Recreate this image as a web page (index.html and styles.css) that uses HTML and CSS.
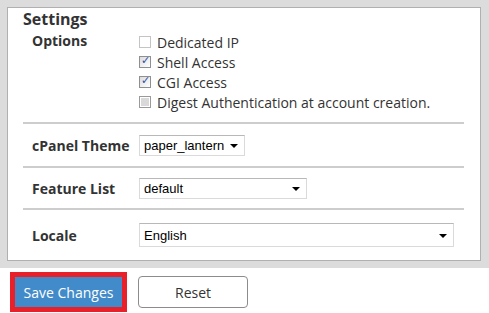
FILE: index.html
```html
<!DOCTYPE html>
<html lang="en">
<head>
    <meta charset="UTF-8">
    <title>Settings</title>
    <link rel="stylesheet" href="styles.css">
</head>
<body>
    <div class="page">
        <div class="panel">
            <h2>Settings</h2>

            <div class="row row-options">
                <div class="label">Options</div>
                <div class="checks">
                    <label class="check"><input type="checkbox" class="light"> Dedicated IP</label>
                    <label class="check"><input type="checkbox" checked> Shell Access</label>
                    <label class="check"><input type="checkbox" checked> CGI Access</label>
                    <label class="check"><input type="checkbox" class="greyed"> Digest Authentication at account creation.</label>
                </div>
            </div>

            <div class="row row-theme">
                <div class="label">cPanel Theme</div>
                <div class="select-wrap theme">
                    <select><option>paper_lantern</option></select>
                </div>
            </div>

            <div class="row row-features">
                <div class="label">Feature List</div>
                <div class="select-wrap features">
                    <select><option>default</option></select>
                </div>
            </div>

            <div class="row row-locale">
                <div class="label">Locale</div>
                <div class="select-wrap locale">
                    <select><option>English</option></select>
                </div>
            </div>
        </div>
    </div>

    <div class="actions">
        <div class="highlight">
            <button class="btn btn-primary">Save Changes</button>
        </div>
        <button class="btn btn-default">Reset</button>
    </div>
</body>
</html>
```

FILE: styles.css
```css
body {
    margin: 0;
    background-color: #fff;
    color: #333;
    font-family: "Open Sans", sans-serif;
}

.page {
    background-color: #dcdcdc;
    padding: 7px 8px 7px 7px;
}

.panel {
    background-color: #fff;
    border: 1px solid #b0b0b0;
    padding: 0 16px 0 15px;
}

h2 {
    margin: 0;
    padding-top: 1px;
    font-size: 16px;
    line-height: 20px;
    font-weight: bold;
    color: #333;
}

.row {
    display: grid;
    grid-template-columns: 107px 1fr;
    align-items: center;
    padding-left: 9px;
    border-top: 2px solid #cdcdcd;
}

.row-options {
    align-items: start;
    border-top: none;
    padding-top: 3px;
    padding-bottom: 10px;
}

.label {
    font-size: 14px;
    font-weight: bold;
    color: #333;
}

.row-options .label {
    line-height: 18px;
}

.checks {
    display: flex;
    flex-direction: column;
}

.check {
    display: flex;
    align-items: center;
    height: 20px;
    font-size: 14px;
    color: #333;
}

.check input {
    appearance: none;
    -webkit-appearance: none;
    width: 12px;
    height: 12px;
    margin: 0 6px 0 0;
    border: 1px solid #8e8f8f;
    background: linear-gradient(135deg, #dcdcdc, #fff);
    position: relative;
}

.check input.light {
    border-color: #c4c4c4;
    background: #fff;
}

.check input.greyed {
    border-color: #9a9a9a;
    background: #fff;
    box-shadow: inset 0 0 0 1px #fff, inset 0 0 0 5px #d9d9d9;
}

.check input:checked::after {
    content: "\2713";
    position: absolute;
    left: 1px;
    top: -3px;
    font-family: "DejaVu Sans", sans-serif;
    font-size: 11px;
    font-weight: bold;
    color: #2f4fa8;
}

.row-theme {
    height: 42px;
}

.row-features {
    height: 40px;
}

.row-locale {
    height: 50px;
}

.select-wrap {
    position: relative;
}

.select-wrap select {
    appearance: none;
    -webkit-appearance: none;
    display: block;
    width: 100%;
    height: 21px;
    margin: 0;
    padding: 0 0 0 4px;
    border: 1px solid #dadada;
    border-top-color: #b8b8b8;
    border-radius: 0;
    background-color: #fff;
    font-family: "Liberation Sans", Arial, sans-serif;
    font-size: 13px;
    color: #000;
}

.select-wrap::after {
    content: "";
    position: absolute;
    right: 7px;
    top: 9px;
    border-left: 4px solid transparent;
    border-right: 4px solid transparent;
    border-top: 4px solid #000;
}

.select-wrap.theme {
    width: 106px;
}

.select-wrap.features {
    width: 168px;
}

.select-wrap.locale {
    width: 315px;
}

.select-wrap.locale select {
    height: 24px;
}

.select-wrap.locale::after {
    top: 11px;
}

.actions {
    display: flex;
    align-items: center;
    gap: 11px;
    padding: 4px 0 0 10px;
}

.highlight {
    border: 5px solid #e8202a;
}

.btn {
    display: block;
    font-family: "Open Sans", sans-serif;
    font-size: 14px;
    cursor: pointer;
}

.btn-primary {
    width: 107px;
    height: 30px;
    border: none;
    background-color: #428bca;
    color: #fff;
}

.btn-default {
    width: 110px;
    height: 32px;
    border: 1px solid #8c8c8c;
    border-radius: 4px;
    background-color: #fff;
    color: #333;
}
```
